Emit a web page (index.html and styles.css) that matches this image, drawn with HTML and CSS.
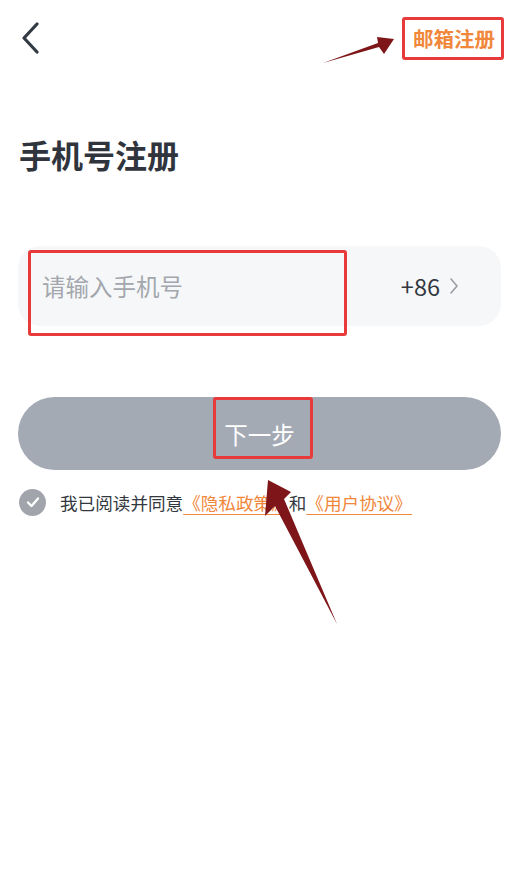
FILE: index.html
```html
<!DOCTYPE html>
<html lang="zh-CN">
<head>
    <meta charset="UTF-8">
    <meta name="viewport" content="width=device-width, initial-scale=1.0">
    <title>手机号注册</title>
    <link rel="stylesheet" href="styles.css">
</head>
<body>
<div class="page">
    <div class="header">
        <svg class="back" width="20" height="32" viewBox="0 0 20 32">
            <path d="M17 2 L4 16 L17 30" fill="none" stroke="#333a44" stroke-width="3.2" stroke-linecap="round" stroke-linejoin="round"/>
        </svg>
        <a class="switch-link">邮箱注册</a>
    </div>

    <h1 class="title">手机号注册</h1>

    <div class="phone-field">
        <span class="placeholder">请输入手机号</span>
        <span class="area-code">+86
            <svg width="10" height="18" viewBox="0 0 10 18">
                <path d="M2 2 L8 9 L2 16" fill="none" stroke="#9a9ea4" stroke-width="1.6" stroke-linecap="round" stroke-linejoin="round"/>
            </svg>
        </span>
    </div>

    <button class="button" disabled>下一步</button>

    <div class="agree">
        <span class="check">
            <svg width="16" height="16" viewBox="0 0 16 16">
                <path d="M3 8.5 L6.5 12 L13 4.5" fill="none" stroke="#fff" stroke-width="2.4" stroke-linecap="round" stroke-linejoin="round"/>
            </svg>
        </span>
        <span class="agree-text">我已阅读并同意<a class="doc">《隐私政策》</a>和<a class="doc">《用户协议》</a></span>
    </div>

    <!-- annotation marks drawn over the screen -->
    <div class="mark mark-email"></div>
    <div class="mark mark-input"></div>
    <div class="mark mark-next"></div>
    <svg class="arrows" width="520" height="890" viewBox="0 0 520 890">
        <polygon points="323,63 379,47 384,54 394,39 377,37 378,43" fill="#7e1519"/>
        <polygon points="268,480 265,516 275,506 337,624 284,499 291,492" fill="#7e1519"/>
    </svg>
</div>
</body>
</html>
```

FILE: styles.css
```css
body {
    margin: 0;
    background: #fff;
    font-family: "Noto Sans CJK SC", "Noto Sans", sans-serif;
}
.page {
    position: relative;
    width: 520px;
    height: 890px;
    overflow: hidden;
}
.header {
    height: 76px;
    display: flex;
    align-items: center;
    justify-content: space-between;
    padding: 0 25px 0 20px;
}
.back {
    display: block;
}
.switch-link {
    color: #f0873a;
    font-size: 20.5px;
    font-weight: bold;
    line-height: 28px;
}
.title {
    margin: 58px 0 0 19px;
    font-size: 32px;
    line-height: 40px;
    font-weight: bold;
    color: #2f343d;
}
.phone-field {
    margin: 72px 19px 0 18px;
    height: 80px;
    border-radius: 22px;
    background: #f6f7f9;
    display: flex;
    align-items: center;
    justify-content: space-between;
    padding: 0 42px 0 24px;
}
.placeholder {
    color: #a3a7ad;
    font-size: 23.5px;
}
.area-code {
    display: flex;
    align-items: center;
    gap: 9px;
    color: #333840;
    font-size: 23.5px;
}
.button {
    display: block;
    margin: 71px 19px 0 18px;
    width: 483px;
    height: 73px;
    border: none;
    border-radius: 37px;
    background: #a3aab4;
    color: #fff;
    font-family: inherit;
    font-size: 23.5px;
    padding: 0;
}
.agree {
    margin: 18px 0 0 19px;
    height: 28px;
    display: flex;
    align-items: center;
    gap: 14px;
}
.check {
    width: 27px;
    height: 27px;
    border-radius: 50%;
    background: #a1a4aa;
    display: flex;
    align-items: center;
    justify-content: center;
}
.agree-text {
    color: #333840;
    font-size: 17.6px;
}
.doc {
    color: #f0873a;
    text-decoration: underline;
    text-underline-offset: 4px;
}
.mark {
    position: absolute;
    border: 3px solid #e83a3a;
    border-radius: 3px;
    box-sizing: border-box;
}
.mark-email {
    left: 402px;
    top: 17px;
    width: 102px;
    height: 43px;
}
.mark-input {
    left: 28px;
    top: 250px;
    width: 319px;
    height: 86px;
}
.mark-next {
    left: 213px;
    top: 397px;
    width: 100px;
    height: 62px;
}
.arrows {
    position: absolute;
    left: 0;
    top: 0;
}
```
